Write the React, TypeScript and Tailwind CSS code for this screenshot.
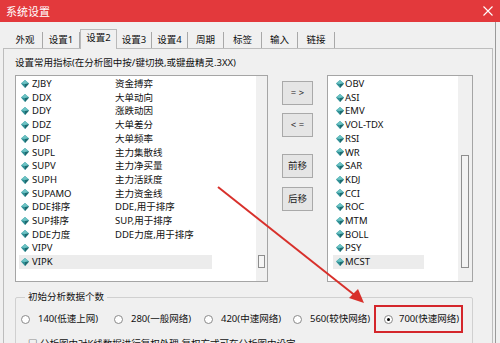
const leftRows: [string, string][] = [
  ["ZJBY", "资金搏弈"],
  ["DDX", "大单动向"],
  ["DDY", "涨跌动因"],
  ["DDZ", "大单差分"],
  ["DDF", "大单频率"],
  ["SUPL", "主力集散线"],
  ["SUPV", "主力净买量"],
  ["SUPH", "主力活跃度"],
  ["SUPAMO", "主力资金线"],
  ["DDE排序", "DDE,用于排序"],
  ["SUP排序", "SUP,用于排序"],
  ["DDE力度", "DDE力度,用于排序"],
  ["VIPV", ""],
  ["VIPK", ""],
];

const rightRows = ["OBV", "ASI", "EMV", "VOL-TDX", "RSI", "WR", "SAR", "KDJ", "CCI", "ROC", "MTM", "BOLL", "PSY", "MCST"];

const tabs: [string, string][] = [
  ["外观", "w-[35px]"],
  ["设置1", "w-[37px]"],
  ["设置2", "w-[37px]"],
  ["设置3", "w-[35px]"],
  ["设置4", "w-[36px]"],
  ["周期", "w-[36px]"],
  ["标签", "w-[38px]"],
  ["输入", "w-[36px]"],
  ["链接", "w-[37px]"],
];

function Gem() {
  return (
    <svg width="8" height="8" viewBox="0 0 8 8" className="shrink-0">
      <polygon points="4,0 8,3.5 4,8 0,3.5" fill="#2f8f95" />
      <polygon points="4,0 8,3.5 4,4 0,3.5" fill="#6cc3c4" />
      <polygon points="4,4 8,3.5 4,8" fill="#1f6b70" />
    </svg>
  );
}

function Radio({ checked = false }: { checked?: boolean }) {
  return (
    <span className="w-[9px] h-[9px] rounded-full border border-[#8a8a8a] bg-white flex items-center justify-center shrink-0">
      {checked && <span className="w-[3px] h-[3px] rounded-full bg-black" />}
    </span>
  );
}

function Btn({ label }: { label: string }) {
  return (
    <div className="w-[31px] h-[24px] bg-[#e5e5e5] border border-[#a9a9a9] flex items-center justify-center text-[9.5px] text-[#222]">
      {label}
    </div>
  );
}

export default function App() {
  return (
    <div
      className="relative w-[500px] h-[343px] overflow-hidden bg-[#f0f0f0] text-[9.5px] text-[#111]"
      style={{ fontFamily: '"Noto Sans", "Noto Sans CJK SC", sans-serif' }}
    >
      {/* title bar */}
      <div className="h-[22px] bg-[#e3393c] flex items-center justify-between pl-[6px] pr-[7px]">
        <span className="text-white text-[11px] leading-none">系统设置</span>
        <svg width="10" height="10" viewBox="0 0 10 10">
          <path d="M0.5 0.5 L9.5 9.5 M9.5 0.5 L0.5 9.5" stroke="#fff" strokeWidth="1.1" />
        </svg>
      </div>

      {/* tabs */}
      <div className="h-[26px] flex items-end pl-[8px]">
        {tabs.map(([t, w]) =>
          t === "设置2" ? (
            <div
              key={t}
              className={`${w} h-[20px] -mb-px relative z-10 bg-[#f0f0f0] border-x border-t border-[#b9b9b9] flex items-center justify-center pb-[2px]`}
            >
              {t}
            </div>
          ) : (
            <div
              key={t}
              className={`${w} h-[16px] border-r border-[#a8a8a8] flex items-center justify-center`}
            >
              {t}
            </div>
          )
        )}
      </div>

      {/* tab pane */}
      <div className="ml-[3px] w-[490px] h-[300px] border border-[#bdbdbd] pl-[11px] pt-[7px]">
        <div className="h-[14px] leading-[14px]">设置常用指标(在分析图中按/键切换,或键盘精灵.3XX)</div>

        <div className="mt-[5px] flex items-start">
          {/* left list */}
          <div className="w-[253px] h-[207px] border border-[#a5a5a5] bg-white flex">
            <div className="flex-1 pt-[1px] pl-[3px]">
              {leftRows.map(([a, b]) => (
                <div
                  key={a}
                  className={`h-[13.7px] flex items-center ${a === "VIPK" ? "bg-[#ececec] w-[193px]" : ""}`}
                >
                  <span className="w-[13px] pl-[2px] flex"><Gem /></span>
                  <span className="w-[83px] leading-none">{a}</span>
                  <span className="leading-none">{b}</span>
                </div>
              ))}
            </div>
            <div className="w-[11px] bg-[#f0f0f0] flex flex-col justify-end items-center pb-[13px]">
              <div className="w-[7px] h-[13px] border border-[#8e8e8e] bg-[#f5f5f5]" />
            </div>
          </div>

          {/* buttons */}
          <div className="ml-[14px] mt-[6px] flex flex-col">
            <Btn label="= >" />
            <div className="h-[8px]" />
            <Btn label="< =" />
            <div className="h-[17px]" />
            <Btn label="前移" />
            <div className="h-[9px]" />
            <Btn label="后移" />
          </div>

          {/* right list */}
          <div className="ml-[14px] w-[146px] h-[207px] border border-[#a5a5a5] bg-white flex">
            <div className="flex-1 pt-[1px] pl-[5px]">
              {rightRows.map((r) => (
                <div
                  key={r}
                  className={`h-[13.7px] flex items-center ${r === "MCST" ? "bg-[#ececec] w-[91px]" : ""}`}
                >
                  <span className="w-[12px] pl-[3px] flex"><Gem /></span>
                  <span className="leading-none">{r}</span>
                </div>
              ))}
            </div>
            <div className="w-[14px] bg-[#f0f0f0] flex flex-col justify-end items-center pb-[13px]">
              <div className="w-[8px] h-[113px] border border-[#8e8e8e] bg-[#f3f3f3]" />
            </div>
          </div>
        </div>

        {/* group box */}
        <fieldset className="mt-[8px] w-[458px] h-[60px] border border-[#d0d0d0] rounded-[2px] pl-[5px]">
          <legend className="ml-[4px] px-[3px] leading-[14px]">初始分析数据个数</legend>
          <div className="mt-[1px] flex items-center whitespace-nowrap">
            <div className="w-[93px] flex items-center gap-[8px]">
              <Radio />
              <span>140(低速上网)</span>
            </div>
            <div className="w-[90px] flex items-center gap-[8px]">
              <Radio />
              <span>280(一般网络)</span>
            </div>
            <div className="w-[89px] flex items-center gap-[8px]">
              <Radio />
              <span>420(中速网络)</span>
            </div>
            <div className="w-[81px] flex items-center gap-[8px]">
              <Radio />
              <span>560(较快网络)</span>
            </div>
            <div className="w-[89px] h-[28px] border-2 border-[#d4262b] flex items-center gap-[6px] pl-[8px]">
              <Radio checked />
              <span>700(快速网络)</span>
            </div>
          </div>
          <div className="mt-[4px] pl-[7px] whitespace-nowrap">□ 分析图中对K线数据进行复权处理,复权方式可在分析图中设定</div>
        </fieldset>
      </div>

      {/* right window edge */}
      <div className="absolute top-[22px] right-[4px] w-px h-[321px] bg-[#9a9a9a]" />

      {/* annotation arrow */}
      <svg className="absolute left-0 top-0 pointer-events-none" width="500" height="343">
        <line x1="218" y1="187" x2="357" y2="297" stroke="#d8302b" strokeWidth="2" />
        <polygon points="364,303 349,298 358,289" fill="#d8302b" />
      </svg>
    </div>
  );
}
